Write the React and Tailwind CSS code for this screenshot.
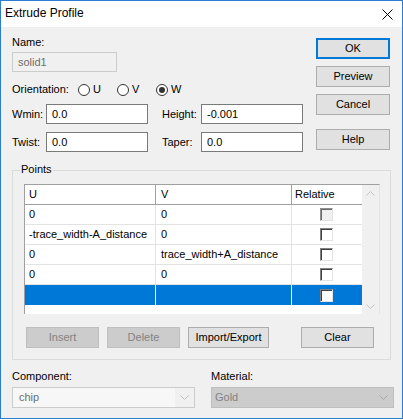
const Btn = ({ children, w, kind }) => {
  const cls =
    kind === 'def'
      ? 'border-2 border-[#0078d7] bg-[#e1e1e1] text-black'
      : kind === 'dis'
      ? 'border border-[#bfbfbf] bg-[#cccccc] text-[#838383]'
      : 'border border-[#adadad] bg-[#e1e1e1] text-black';
  return (
    <div className={`flex h-[21px] shrink-0 items-center justify-center ${w} ${cls}`}>{children}</div>
  );
};

const Radio = ({ label, checked }) => (
  <div className="flex w-[39px] items-center">
    <span className="flex h-[12px] w-[12px] items-center justify-center rounded-full border border-[#333333] bg-white">
      {checked && <span className="h-[6px] w-[6px] rounded-full bg-[#333333]" />}
    </span>
    <span className="ml-[3px]">{label}</span>
  </div>
);

const Input = ({ value }) => (
  <div className="flex h-[20px] w-[102px] items-center border border-[#7a7a7a] bg-white pl-[5px]">{value}</div>
);

const Check = ({ light }) =>
  light ? (
    <span className="h-[13px] w-[13px] border border-t-[#909090] border-l-[#909090] border-b-[#e3e3e3] border-r-[#e3e3e3] bg-[#f0f0f0] shadow-[inset_1px_1px_0_#6a6a6a]" />
  ) : (
    <span className="h-[13px] w-[13px] border border-t-[#808080] border-l-[#808080] border-b-[#e3e3e3] border-r-[#e3e3e3] bg-white shadow-[inset_1px_1px_0_#404040]" />
  );

const Chevron = ({ up, color = '#bfbfbf' }) => (
  <svg width="9" height="5" viewBox="0 0 9 5">
    <path d={up ? 'M0.5 4.5L4.5 0.5L8.5 4.5' : 'M0.5 0.5L4.5 4.5L8.5 0.5'} fill="none" stroke={color} strokeWidth="1" />
  </svg>
);

const rows = [
  { u: '0', v: '0', light: true },
  { u: '-trace_width-A_distance', v: '0' },
  { u: '0', v: 'trace_width+A_distance' },
  { u: '0', v: '0' },
];

export default function App() {
  return (
    <div className="h-[420px] w-[403px] bg-white font-['Liberation_Sans',Arial,sans-serif] text-[11px] leading-[13px] text-black">
      <div className="flex h-[419px] w-[403px] flex-col border border-[#2b7cd3] bg-[#f0f0f0]">
        <div className="flex h-[26px] shrink-0 items-start justify-between bg-white pl-[4px] pr-[9px] pt-[4px]">
          <span className="text-[12px] leading-[16px]">Extrude Profile</span>
          <svg className="mt-[4px]" width="11" height="11" viewBox="0 0 11 11">
            <path d="M0.5 0.5L10.5 10.5M10.5 0.5L0.5 10.5" stroke="#000" strokeWidth="1" />
          </svg>
        </div>

        <div className="flex flex-col pl-[11px]">
          {/* top section */}
          <div className="flex">
            <div className="flex w-[291px] flex-col">
              <div className="mt-[9px] h-[13px]">Name:</div>
              <div className="mt-[3px] flex h-[20px] w-[105px] items-center border border-[#cccccc] bg-[#f0f0f0] pl-[5px] text-[#6d6d6d]">
                solid1
              </div>
              <div className="mt-[11px] flex h-[13px] items-center">
                <span className="w-[66px]">Orientation:</span>
                <Radio label="U" />
                <Radio label="V" />
                <Radio label="W" checked />
              </div>
              <div className="mt-[8px] flex h-[20px] items-center">
                <span className="w-[34px]">Wmin:</span>
                <Input value="0.0" />
                <span className="ml-[14px] w-[39px]">Height:</span>
                <Input value="-0.001" />
              </div>
              <div className="mt-[8px] flex h-[20px] items-center">
                <span className="w-[34px]">Twist:</span>
                <Input value="0.0" />
                <span className="ml-[14px] w-[39px]">Taper:</span>
                <Input value="0.0" />
              </div>
            </div>
            <div className="ml-[13px] flex flex-col">
              <div className="mt-[11px]">
                <Btn w="w-[74px]" kind="def">OK</Btn>
              </div>
              <div className="mt-[7px]">
                <Btn w="w-[74px]">Preview</Btn>
              </div>
              <div className="mt-[7px]">
                <Btn w="w-[74px]">Cancel</Btn>
              </div>
              <div className="mt-[14px]">
                <Btn w="w-[74px]">Help</Btn>
              </div>
            </div>
          </div>

          {/* Points group */}
          <div className="relative mt-[18px] flex w-[379px] flex-col border border-[#dcdcdc] pb-[11px] pl-[11px] pt-[13px]">
            <span className="absolute left-[7px] top-[-8px] bg-[#f0f0f0] px-[1px]">Points</span>
            <div className="flex h-[130px] w-[356px] border-l border-r border-t border-l-[#a0a0a0] border-r-[#e3e3e3] border-t-[#a0a0a0]">
              <div className="flex w-[337px] flex-col bg-white">
                <div className="flex h-[20px] border-b border-[#a0a0a0]">
                  <div className="flex w-[131px] items-center border-r border-[#a0a0a0] pl-[4px]">U</div>
                  <div className="flex w-[136px] items-center border-r border-[#a0a0a0] pl-[5px]">V</div>
                  <div className="flex w-[70px] items-center pl-[3px]">Relative</div>
                </div>
                {rows.map((r, i) => (
                  <div key={i} className="flex h-[20px] border-b border-[#e3e3e3]">
                    <div className="flex w-[131px] items-center border-r border-[#e3e3e3] pb-[1px] pl-[4px]">{r.u}</div>
                    <div className="flex w-[136px] items-center border-r border-[#e3e3e3] pb-[1px] pl-[5px]">{r.v}</div>
                    <div className="flex w-[70px] items-center justify-center pr-[1px]">
                      <Check light={r.light} />
                    </div>
                  </div>
                ))}
                <div className="flex h-[20px] bg-[#0078d7]">
                  <div className="w-[131px] border-r border-white" />
                  <div className="w-[136px] border-r border-white" />
                  <div className="flex w-[70px] items-center justify-center pr-[1px]">
                    <Check />
                  </div>
                </div>
              </div>
              <div className="flex w-[17px] flex-col items-center justify-between bg-[#f0f0f0] pb-[5px] pt-[6px]">
                <Chevron up color="#c4c4c4" />
                <Chevron color="#c4c4c4" />
              </div>
            </div>
            <div className="mt-[13px] flex pl-[2px]">
              <Btn w="w-[73px]" kind="dis">Insert</Btn>
              <div className="ml-[8px]">
                <Btn w="w-[73px]" kind="dis">Delete</Btn>
              </div>
              <div className="ml-[8px]">
                <Btn w="w-[81px]">Import/Export</Btn>
              </div>
              <div className="ml-[32px]">
                <Btn w="w-[73px]">Clear</Btn>
              </div>
            </div>
          </div>

          {/* bottom combos */}
          <div className="mt-[10px] flex">
            <div className="flex w-[183px] flex-col">
              <div className="h-[13px]">Component:</div>
              <div className="mt-[4px] flex h-[21px] border border-[#cccccc]">
                <div className="flex flex-1 items-center bg-[#f7f7f7] pl-[6px] text-[#6d6d6d]">chip</div>
                <div className="flex w-[19px] items-center justify-center bg-[#f0f0f0]">
                  <Chevron />
                </div>
              </div>
            </div>
            <div className="ml-[16px] flex w-[183px] flex-col">
              <div className="h-[13px]">Material:</div>
              <div className="mt-[4px] flex h-[21px] items-center justify-between border border-[#bfbfbf] bg-[#cccccc] pl-[3px] pr-[5px] text-[#838383]">
                <span>Gold</span>
                <Chevron color="#a8a8a8" />
              </div>
            </div>
          </div>
        </div>
      </div>
    </div>
  );
}
